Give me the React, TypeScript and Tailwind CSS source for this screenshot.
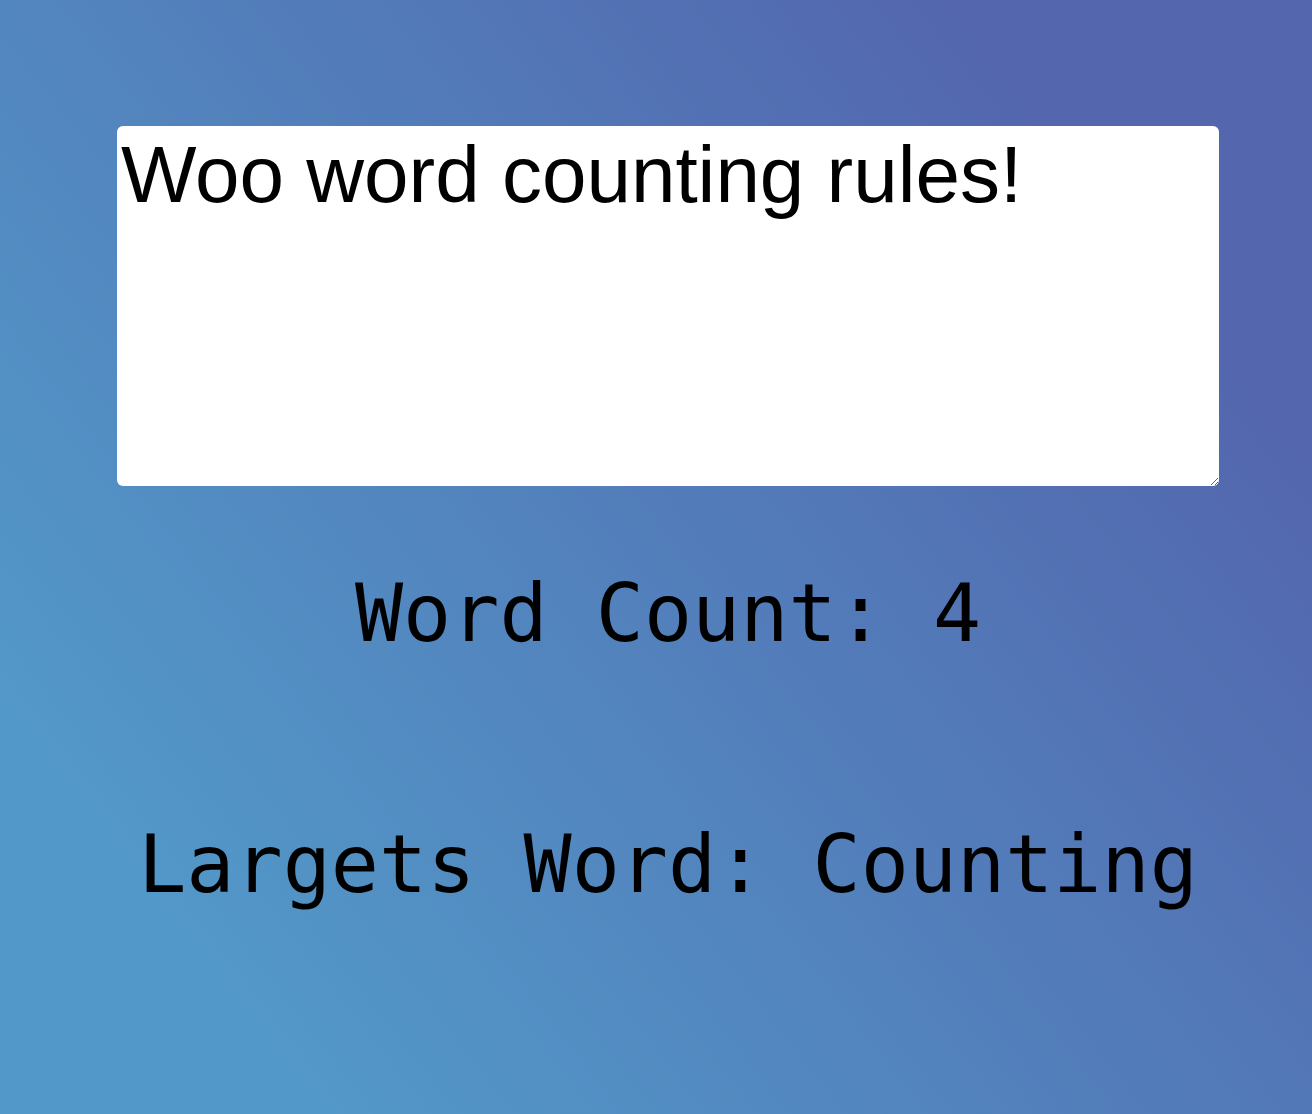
import { useState } from 'react';

function largestWord(text: string) {
	const words = text.match(/[A-Za-z]+/g) || [];
	let best = '';
	for (const w of words) {
		if (w.length > best.length) best = w;
	}
	return best ? best.charAt(0).toUpperCase() + best.slice(1) : '';
}

export default function App() {
	const [text, setText] = useState('Woo word counting rules!');
	const count = text.trim() ? text.trim().split(/\s+/).length : 0;

	return (
		<div className="min-h-screen w-full bg-[linear-gradient(52deg,#5298c8_15%,#5366ae_84%)] pt-[126px] pl-[24px] flex flex-col items-center">
			<textarea
				value={text}
				onChange={(e) => setText(e.target.value)}
				className="w-[1102px] h-[360px] shrink-0 bg-white rounded-md border-0 pl-[4px] pt-[3px] text-[80px] leading-[92px] text-black outline-none font-['Liberation_Sans',Arial,sans-serif]"
			/>
			<p className="mt-[81px] text-[80px] leading-[94px] text-black font-['DejaVu_Sans_Mono','Liberation_Mono',monospace]">
				Word Count: {count}
			</p>
			<p className="mt-[157px] text-[80px] leading-[94px] text-black font-['DejaVu_Sans_Mono','Liberation_Mono',monospace]">
				Largets Word: {largestWord(text)}
			</p>
		</div>
	);
}
